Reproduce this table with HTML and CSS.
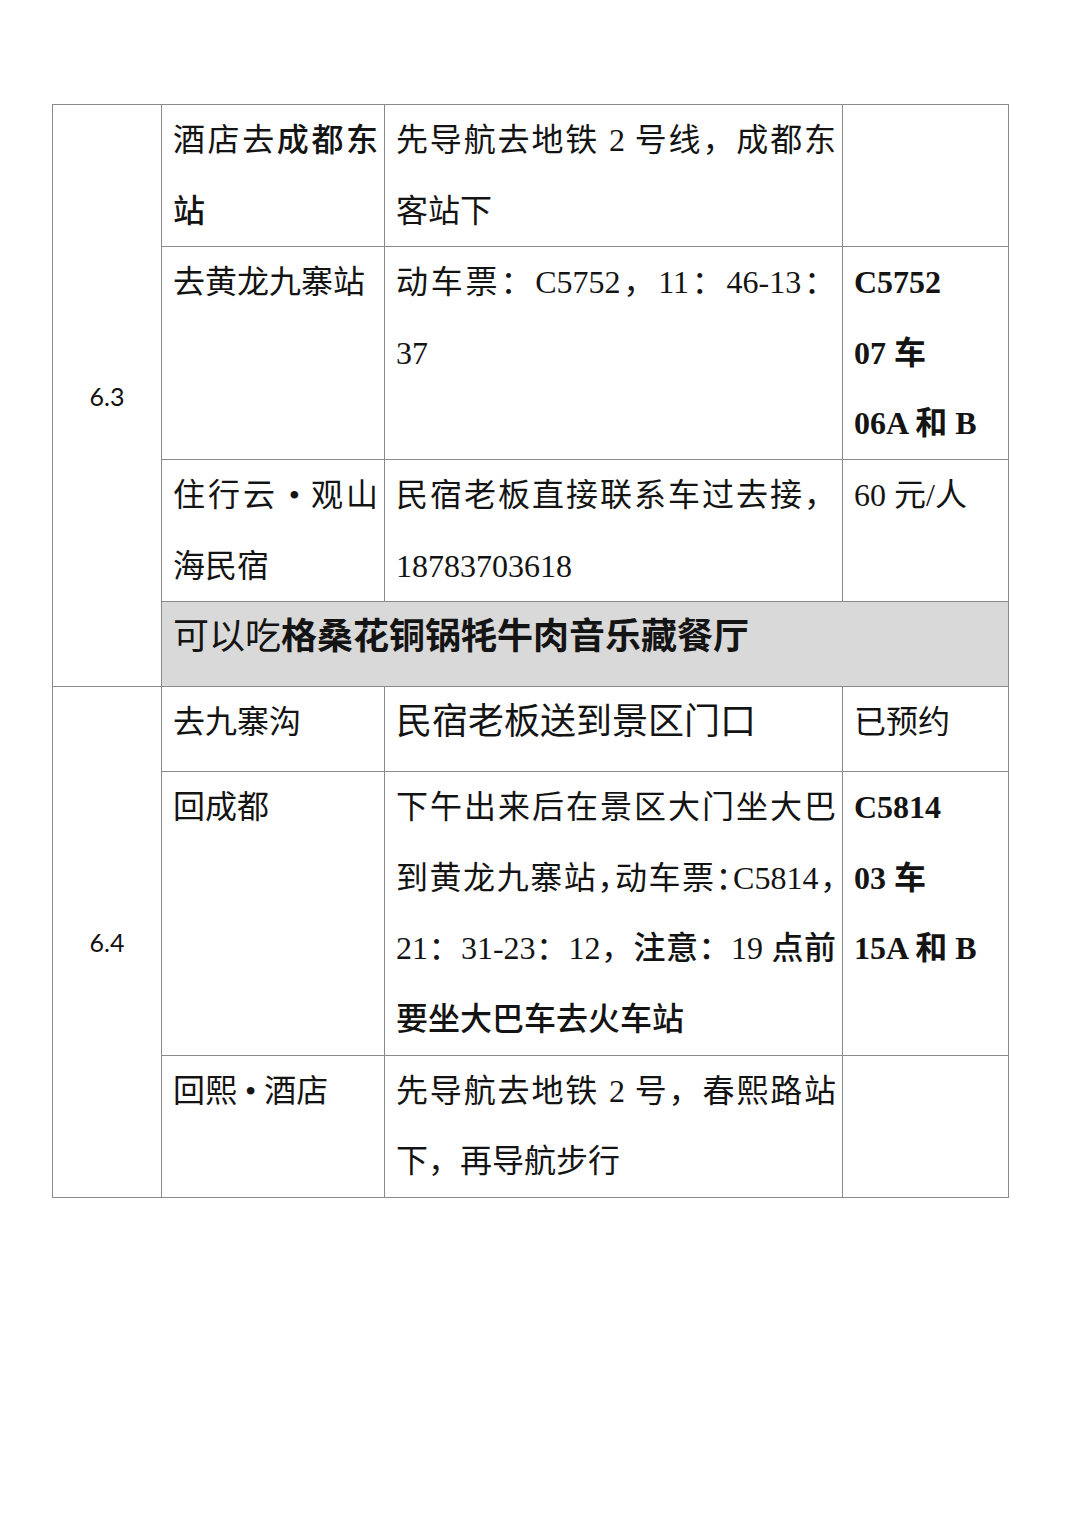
FILE: index.html
```html
<!DOCTYPE html>
<html lang="zh-CN">
<head>
<meta charset="utf-8">
<title>行程</title>
<link rel="stylesheet" href="styles.css">
</head>
<body>
<div class="page">
  <table class="plan">
    <colgroup>
      <col class="c-date">
      <col class="c-item">
      <col class="c-how">
      <col class="c-note">
    </colgroup>
    <tbody>
      <tr>
        <td class="date" rowspan="4">6.3</td>
        <td>酒店去<b class="mid">成都东站</b></td>
        <td>先导航去地铁 2 号线，成都东客站下</td>
        <td></td>
      </tr>
      <tr>
        <td>去黄龙九寨站</td>
        <td>动车票：C5752，11：46-13：37</td>
        <td class="ticket"><span>C5752</span><span>07 车</span><span>06A 和 B</span></td>
      </tr>
      <tr>
        <td>住行云 • 观山海民宿</td>
        <td>民宿老板直接联系车过去接，18783703618</td>
        <td>60 元/人</td>
      </tr>
      <tr class="single">
        <td class="food" colspan="3">可以吃<b>格桑花铜锅牦牛肉音乐藏餐厅</b></td>
      </tr>
      <tr class="single">
        <td class="date" rowspan="4">6.4</td>
        <td>去九寨沟</td>
        <td class="big">民宿老板送到景区门口</td>
        <td>已预约</td>
      </tr>
      <tr>
        <td>回成都</td>
        <td>下午出来后在景区大门坐大巴到黄龙九寨站<span class="tight">，动车票：C5814，</span>21：31-23：12，<b class="mid">注意：19 点前要坐大巴车去火车站</b></td>
        <td class="ticket"><span>C5814</span><span>03 车</span><span>15A 和 B</span></td>
      </tr>
      <tr>
        <td>回熙 • 酒店</td>
        <td>先导航去地铁 2 号，春熙路站下，再导航步行</td>
        <td></td>
      </tr>
    </tbody>
  </table>
</div>
</body>
</html>
```

FILE: styles.css
```css
html, body {
  margin: 0;
  padding: 0;
  background: #ffffff;
}

.page {
  padding: 104px 0 0 52px;
}

.plan {
  border-collapse: collapse;
  table-layout: fixed;
  width: 957px;
  font-family: "Liberation Serif", "Noto Sans CJK SC", serif;
  font-size: 32px;
  line-height: 70.6px;
  color: #141414;
}

.c-date { width: 109px; }
.c-item { width: 223px; }
.c-how { width: 458px; }
.c-note { width: 166px; }

.plan td {
  border: 1px solid #8a8a8a;
  padding: 0 6px 0 11px;
  vertical-align: top;
  text-align: justify;
}

.plan b {
  font-weight: 700;
}

.plan b.mid {
  font-weight: 500;
}

.plan .tight {
  font-feature-settings: "halt";
}

.plan td.date {
  vertical-align: middle;
  text-align: center;
  font-family: "Lato", "Open Sans", sans-serif;
  font-size: 25px;
  line-height: 30px;
  padding: 0;
  color: #111111;
}

.plan tr.single {
  height: 85px;
}

.plan td.food {
  background: #d9d9d9;
  font-size: 36px;
}

.plan td.big {
  font-size: 36px;
}

.plan td.ticket {
  font-weight: 700;
}

.plan td.ticket span {
  display: block;
}
```
